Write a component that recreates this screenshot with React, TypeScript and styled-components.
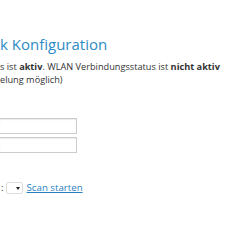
import React from "react";
import styled, { createGlobalStyle } from "styled-components";

const Global = createGlobalStyle`
  html, body { margin: 0; padding: 0; background: #ffffff; }
  body { font-family: "Open Sans", "DejaVu Sans", sans-serif; color: #333333; }
`;

const Page = styled.div`
  width: 250px;
  height: 250px;
  overflow: hidden;
  padding: 34px 0 0 0;
  box-sizing: border-box;
  display: flex;
  flex-direction: column;
`;

const Title = styled.h2`
  margin: 0;
  font-size: 15px;
  font-weight: 400;
  line-height: 20px;
  color: #2e8bc4;
  white-space: nowrap;
`;

const Status = styled.p`
  margin: 6px 0 0 0;
  font-size: 9.2px;
  line-height: 13px;
  white-space: nowrap;
  b { font-weight: 700; }
`;

const Fields = styled.div`
  margin-top: 32px;
  display: flex;
  flex-direction: column;
  gap: 3px;
`;

const Input = styled.input`
  width: 78px;
  height: 16px;
  margin: 0 0 0 -1px;
  padding: 0;
  box-sizing: border-box;
  border: 1px solid #cccccc;
  box-shadow: inset 0 1px 1px rgba(0, 0, 0, 0.08);
  background: #ffffff;
`;

const ScanRow = styled.div`
  margin-top: 28px;
  height: 14px;
  display: flex;
  align-items: center;
  font-size: 9.7px;
  line-height: 14px;
  white-space: nowrap;
`;

const Colon = styled.span`
  margin-left: 1px;
`;

const Select = styled.div`
  margin-left: 2px;
  width: 17px;
  height: 12px;
  box-sizing: border-box;
  border: 1px solid #dddddd;
  border-radius: 2px;
  display: flex;
  align-items: center;
  justify-content: flex-end;
  padding-right: 2px;
  &::after {
    content: "";
    border-left: 2.5px solid transparent;
    border-right: 2.5px solid transparent;
    border-top: 3px solid #222;
  }
`;

const Link = styled.a`
  margin-left: 4px;
  color: #2a7fbf;
  text-decoration: underline;
`;

export default function App() {
  return (
    <>
      <Global />
      <Page>
        <Title>k Konfiguration</Title>
        <Status>
          s ist <b>aktiv</b>. WLAN Verbindungsstatus ist <b>nicht aktiv</b>
          <br />
          elung möglich)
        </Status>
        <Fields>
          <Input type="text" />
          <Input type="password" />
        </Fields>
        <ScanRow>
          <Colon>:</Colon>
          <Select />
          <Link href="#">Scan starten</Link>
        </ScanRow>
      </Page>
    </>
  );
}
